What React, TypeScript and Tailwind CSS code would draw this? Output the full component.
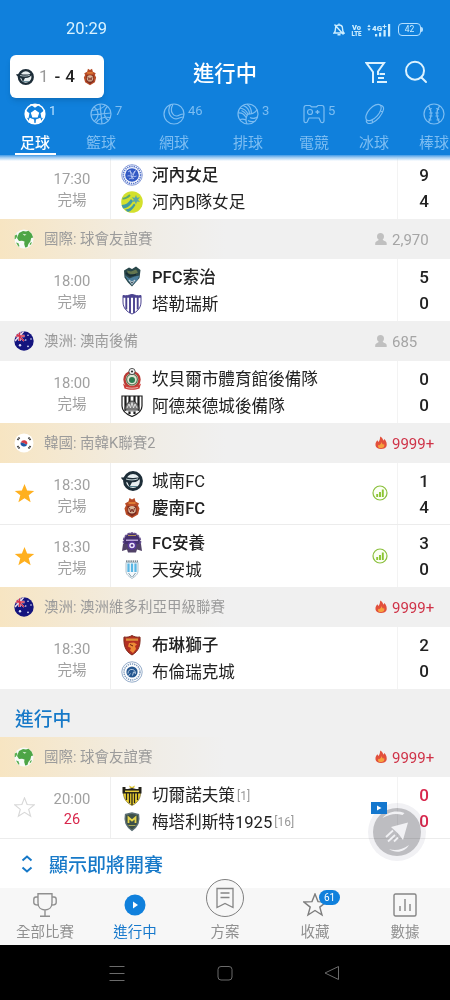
import type { ReactNode } from "react";

interface Team {
  name: string;
  crest: string;
  score: number;
  bold?: boolean;
  rank?: string;
}

interface Match {
  time: string;
  status: string;
  live?: boolean;
  star?: "on" | "off";
  stats?: boolean;
  home: Team;
  away: Team;
}

interface League {
  flag: string;
  name: string;
  viewers: string;
  hot?: boolean;
  plain?: boolean;
  matches: Match[];
}

const firstMatch: Match = {
  time: "17:30",
  status: "完場",
  home: { name: "河內女足", crest: "hanoi", score: 9, bold: true },
  away: { name: "河內B隊女足", crest: "hanoiB", score: 4 },
};

const finished: League[] = [
  {
    flag: "world",
    name: "國際: 球會友誼賽",
    viewers: "2,970",
    matches: [
      {
        time: "18:00",
        status: "完場",
        home: { name: "PFC索治", crest: "sochi", score: 5, bold: true },
        away: { name: "塔勒瑞斯", crest: "talleres", score: 0 },
      },
    ],
  },
  {
    flag: "au",
    name: "澳洲: 澳南後備",
    viewers: "685",
    plain: true,
    matches: [
      {
        time: "18:00",
        status: "完場",
        home: { name: "坎貝爾市體育館後備隊", crest: "campbell", score: 0 },
        away: { name: "阿德萊德城後備隊", crest: "adelaide", score: 0 },
      },
    ],
  },
  {
    flag: "kr",
    name: "韓國: 南韓K聯賽2",
    viewers: "9999+",
    hot: true,
    matches: [
      {
        time: "18:30",
        status: "完場",
        star: "on",
        stats: true,
        home: { name: "城南FC", crest: "seongnam", score: 1 },
        away: { name: "慶南FC", crest: "gyeongnam", score: 4, bold: true },
      },
      {
        time: "18:30",
        status: "完場",
        star: "on",
        stats: true,
        home: { name: "FC安養", crest: "anyang", score: 3, bold: true },
        away: { name: "天安城", crest: "cheonan", score: 0 },
      },
    ],
  },
  {
    flag: "au",
    name: "澳洲: 澳洲維多利亞甲級聯賽",
    viewers: "9999+",
    hot: true,
    matches: [
      {
        time: "18:30",
        status: "完場",
        home: { name: "布琳獅子", crest: "lions", score: 2, bold: true },
        away: { name: "布倫瑞克城", crest: "brunswick", score: 0 },
      },
    ],
  },
];

const live: League[] = [
  {
    flag: "world",
    name: "國際: 球會友誼賽",
    viewers: "9999+",
    hot: true,
    matches: [
      {
        time: "20:00",
        status: "26",
        live: true,
        star: "off",
        home: { name: "切爾諾夫策", crest: "chernivtsi", score: 0, rank: "[1]" },
        away: { name: "梅塔利斯特1925", crest: "metalist", score: 0, rank: "[16]" },
      },
    ],
  },
];

const crests: Record<string, ReactNode> = {
  hanoi: (
    <>
      <circle cx="11" cy="11" r="10.3" fill="#fff" stroke="#6d86d0" strokeWidth=".8" />
      <circle cx="11" cy="11" r="8.6" fill="none" stroke="#5b79cc" strokeWidth="1.6" strokeDasharray="1.400 .8" />
      <circle cx="11" cy="11" r="6.8" fill="#3259c4" />
      <path d="M7 8c2-2 3 0 4 2s2-4 4-3M6.500 12c3-1 5 2 9 0M8 15c2-1 3 0 5-.5M9 6l2 8 3-7" stroke="#c6d4f8" fill="none" strokeWidth=".8" />
    </>
  ),
  hanoiB: (
    <>
      <circle cx="11" cy="11" r="10.8" fill="#d3e02d" />
      <path d="M.6 14C5 14 8 11 10 8l2 2c-2 4-5 7-10 7.500zM4 18.500c4 0 7-3 9-6l1.500 1.500c-2 3-4 6-7.500 7z" fill="#3f9aa5" />
      <path d="M1.500 7.500C5 8 7 6 9 4" stroke="#5aa870" strokeWidth="1.800" fill="none" />
      <path d="M15 4l1 2.800 3-.5-2 2.400 2 2.200-3-.3-1 2.800-1.200-2.800-3 .3 2-2.200-2-2.400 3 .5z" fill="#5ba6a8" />
    </>
  ),
  sochi: (
    <>
      <path d="M3 4.500l5-3 3 1.500 4-2.500 4.500 3.500-1 8-3.500 4-4 4.500-4-4-3.500-5z" fill="#29474a" />
      <path d="M6 4.500l4 1 5-2 2 3-4 2-6-1z" fill="#64764f" />
      <path d="M3.500 9l5 3.500 5-2 5-1-2 4.500-5.500 5-4-4.500z" fill="#4a7c9a" />
      <path d="M5 7l4 3 6-1.500" stroke="#182c33" strokeWidth="1.600" fill="none" />
      <path d="M8 14l3 2 3-2-3 4.500z" stroke="#d7e3e8" strokeWidth=".8" fill="#1d2f3b" />
    </>
  ),
  talleres: (
    <>
      <path d="M2 2.500c3 1 6-.5 9-1 3 .5 6 2 9 1V9c0 6-4 10-9 12-5-2-9-6-9-12z" fill="#fff" stroke="#4b4390" />
      <path d="M5.300 3v13.500M9 2v18M13 2v18M16.700 3v13.500" stroke="#4b4390" strokeWidth="1.900" />
      <path d="M2 2.500c3 1 6-.5 9-1 3 .5 6 2 9 1v2.200H2z" fill="#4b4390" />
    </>
  ),
  campbell: (
    <>
      <circle cx="11" cy="11.500" r="7.500" fill="#dfe5d4" stroke="#b93b35" strokeWidth="2.400" />
      <circle cx="11" cy="11.500" r="5.400" fill="none" stroke="#5b7a58" strokeWidth="1.200" />
      <circle cx="11" cy="12" r="3" fill="#2d7b50" />
      <path d="M2 15.500c5 4 13 4 18 0l-1.500 5c-4.500 1.800-10.500 1.800-15 0z" fill="#cc3f3a" />
      <path d="M5 19.300c4 1.200 8 1.200 12 0" stroke="#f0c9c4" strokeWidth=".8" fill="none" />
      <circle cx="11" cy="3.500" r="3.100" fill="#f4f4f4" stroke="#333" strokeWidth=".8" />
      <circle cx="11" cy="3.500" r="1.100" fill="#333" />
    </>
  ),
  adelaide: (
    <>
      <path d="M1 1h20v10c0 5-5 8.500-10 10.500C6 19.500 1 16 1 11z" fill="#fff" stroke="#1c1c1c" strokeWidth="1.200" />
      <path d="M4.500 1v15M8.500 1v18M13.500 1v18M17.500 1v15" stroke="#1c1c1c" strokeWidth="2.200" />
      <path d="M4 14.500c0-4.500 3-8.500 7-8.500s7 4 7 8.500c-5 2-9 2-14 0z" fill="#777" stroke="#222" strokeWidth=".7" />
      <path d="M6 13l2-4 1.500 4L11 7.500l1.500 5.500L14 9l2 4M4.500 16h13" stroke="#e6e6e6" strokeWidth=".9" fill="none" />
    </>
  ),
  seongnam: (
    <>
      <circle cx="12" cy="11" r="8.400" fill="#e8eff1" stroke="#1d2d38" strokeWidth="3" />
      <path d="M0 7.500l6-.2c4 1 6 1 14-.3-2 4-5 5.500-9 5.200L8.500 17l-2-4.500C4 11 1 10.500 0 7.500z" fill="#1d2d38" />
      <path d="M5 9c4 1.300 8 1.200 12-.2" stroke="#c9d7da" strokeWidth="1" fill="none" />
      <path d="M8 16.500h8" stroke="#57808d" strokeWidth="1" />
    </>
  ),
  gyeongnam: (
    <>
      <path d="M7.500 4.500L8.500 1 11 2.500 13.500 1l1 3.500 3.500 2-1 2 1.500 3-1.500 6-6 3.500L5 17.500l-1.500-6L5 8.500l-1-2z" fill="#b74b26" />
      <path d="M6.500 9h9v7.500L11 19.500l-4.500-3z" fill="#7d2c21" />
      <circle cx="11" cy="12.800" r="3.800" fill="#d9b79a" />
      <path d="M8.500 11l1.200 4L11 12l1.300 3 1.200-4" fill="none" stroke="#7d2c21" />
      <path d="M7.500 6h7" stroke="#e9883b" strokeWidth="1.600" />
    </>
  ),
  anyang: (
    <>
      <circle cx="11" cy="9.500" r="8.500" fill="#44306e" stroke="#65508c" strokeWidth="1.600" strokeDasharray="2.500 1" />
      <path d="M2 12l-1 7 5-1.500 1 3h8l1-3 5 1.500-1-7z" fill="#514267" />
      <path d="M5 7.500h12v1.500H5z" fill="#b7a2d4" />
      <circle cx="11" cy="13.500" r="3.600" fill="#eee6fa" stroke="#56349a" strokeWidth="1.600" />
      <circle cx="11" cy="13.500" r="1.300" fill="#4f3586" />
      <path d="M7 3.500h8" stroke="#b49559" />
    </>
  ),
  cheonan: (
    <>
      <path d="M5 3.500h12V12c0 3.500-3 5.500-6 7.500-3-2-6-4-6-7.500z" fill="#f4f9fd" stroke="#9bb3c0" strokeWidth=".8" />
      <path d="M5 2.200h12" stroke="#50636e" strokeWidth="1.300" strokeDasharray="1.500 .7" />
      <path d="M7.500 4.500V13M11 4.500V13M14.500 4.500V13" stroke="#59b6e4" strokeWidth="2.300" />
      <path d="M7.500 14l3 4M14.500 14l-3 4" stroke="#77929f" strokeWidth=".9" />
    </>
  ),
  lions: (
    <>
      <path d="M3 3c3 .5 5.500 0 8-1.500C13.500 3 16 3.500 19 3c.5 8-1 14-8 18C4 17 2.500 11 3 3z" fill="#b32f22" stroke="#7d2a1c" />
      <path d="M5 4.500h12v2.300H5z" fill="#dc8f3b" />
      <path d="M8 9l5-.5 3 2-2 1.500 1 3-3 4-3-2.500 1-2.500-3-1.500z" fill="#ec8b36" />
      <path d="M9 10.500l3 1.500" stroke="#67210f" />
    </>
  ),
  brunswick: (
    <>
      <circle cx="11" cy="11" r="10.200" fill="#fff" stroke="#8aa4c4" strokeWidth=".9" />
      <circle cx="11" cy="11" r="8" fill="none" stroke="#7d99bb" strokeWidth="1.500" strokeDasharray="1.300 .9" />
      <circle cx="11" cy="11" r="5.600" fill="#24568f" />
      <path d="M7 12.500c0-3 2-4.500 4.500-4 2 .4 3 2 3 4l-2-1.500-1 3.500M7.500 15l2-2.500" stroke="#c4d7ea" fill="none" strokeWidth=".9" />
    </>
  ),
  chernivtsi: (
    <>
      <path d="M2.500 8h17c.3 6-2.500 10.500-8.500 13.500C5 18.500 2.200 14 2.500 8z" fill="#f2d633" stroke="#6d6224" strokeWidth=".7" />
      <path d="M5.500 9v7M8.500 9v10M11 9v12M13.500 9v10M16.500 9v7" stroke="#24221a" strokeWidth="1.300" />
      <path d="M1.500 3h3v2h2.500l4-1 4 1h2.500V3h3v6.500h-19z" fill="#24221a" />
      <path d="M4 7.300h14" stroke="#e9cf3a" strokeWidth="1.500" />
      <path d="M8 1.500l3 1.500 3-1.500-1 2.500H9z" fill="#d9c235" />
    </>
  ),
  metalist: (
    <>
      <path d="M4.500 3.500L11 2l6.500 1.500c1.500 7-.5 12-6.500 16C5 15.500 3 10.500 4.500 3.500z" fill="#3d5048" stroke="#5e7177" strokeWidth="1.300" />
      <path d="M7.500 12V6.500l3.500 3 3.500-3V12" fill="none" stroke="#e6d54b" strokeWidth="1.800" />
      <path d="M7.500 14.500h7" stroke="#a7a95a" strokeWidth="1" />
    </>
  ),
};

function Crest({ id, className = "size-[22px]" }: { id: string; className?: string }) {
  return (
    <svg viewBox="0 0 22 22" className={`${className} shrink-0`}>
      {crests[id]}
    </svg>
  );
}

function Flag({ id }: { id: string }) {
  if (id === "au") {
    return (
      <svg viewBox="0 0 20 20" className="size-5 shrink-0">
        <clipPath id="auClip">
          <circle cx="10" cy="10" r="9.700" />
        </clipPath>
        <g clipPath="url(#auClip)">
          <path d="M0 0h20v20H0z" fill="#14147e" />
          <path d="M0 0l10 10M10 0L1 10" stroke="#e9dcea" strokeWidth="1.600" />
          <path d="M5.500 0v10M0 5h10.500" stroke="#f3e6ec" strokeWidth="2.400" />
          <path d="M5.500 0v10M0 5h10.500M0 0l10 10" stroke="#d3304b" strokeWidth="1.300" />
        </g>
        <g fill="#dfe3f7">
          <circle cx="6" cy="14.300" r="1.200" />
          <circle cx="14" cy="4.300" r=".8" />
          <circle cx="11.700" cy="9" r=".8" />
          <circle cx="17" cy="8" r=".8" />
          <circle cx="14" cy="15.300" r=".9" />
        </g>
      </svg>
    );
  }
  if (id === "kr") {
    return (
      <svg viewBox="0 0 20 20" className="size-5 shrink-0">
        <circle cx="10" cy="10" r="9.500" fill="#fff" />
        <path d="M6.800 9.500a3.400 3.400 0 016.600 1.300C12 12 11 10.500 10 10.200c-1.200-.5-2 0-3.200-.7z" fill="#d33a45" />
        <path d="M6.700 9.300c1.100.9 2.100.3 3.300.9 1.300.6 1.900 1.400 3.300.8a3.400 3.400 0 01-6.600-1.700z" fill="#1e56a5" />
        <path d="M3.500 7l2-2.500M16.500 7l-2-2.500M3.500 13l2 2.500M16.500 13l-2 2.500" stroke="#3d3d3d" strokeWidth="1.800" strokeDasharray="1.400 .4" />
      </svg>
    );
  }
  return (
    <svg viewBox="0 0 20 20" className="size-5 shrink-0">
      <circle cx="10" cy="10" r="9.500" fill="#f7faf7" />
      <path d="M5 4l4-2 3 .6 2.500-.8 3 2.700 1.700 4-2 .5-.8 3.500-2 2.500-1 3-2.200.6-1-3.700.3-2.500-2.500-.7-3 .2L3 9z" fill="#4da546" />
      <path d="M.8 6.500L3 5.500l.3 2L1.500 10l-.9.2zM2 13.500l2.500.7 1 3-1.200.3zM16 14l2-1-1 2.500-1.300.8z" fill="#5cb052" />
      <path d="M8.500 4.800l4 .7-2 1.300z" fill="#dbefd7" />
    </svg>
  );
}

function Flame() {
  return (
    <svg viewBox="0 0 14 16" className="-mt-[2px] h-[15px] w-[12px]">
      <path d="M6 1c3 1.500 3.500 3.500 3.500 5L11 4c2.500 3 3 5.500 2.500 8-.7 2.500-3 3.500-6.500 3.500S1 14 .6 11.500C.2 9 1.500 7 2.800 5.500L4 7.500C5.500 5.500 6 3.500 6 1z" fill="#e2503c" />
      <path d="M7.500 7.500c1 2 1 2.500 2 3l1-1c1 2.500.3 4.800-3.500 5-3.500 0-4-2-3-4l1 .8c1.500-1 2.200-2 2.500-3.800z" fill="#f6a23e" />
    </svg>
  );
}

function LeagueHeader({ league }: { league: League }) {
  return (
    <div
      className={`flex h-10 items-center pl-[14px] text-[14.500px] ${
        league.plain ? "bg-[#f0f0f0]" : "bg-linear-to-r from-[#f7e5c2] via-[#f0ede7] via-35% to-[#f0f0f0] to-50%"
      }`}
    >
      <Flag id={league.flag} />
      <span className="mt-[2px] ml-[10px] leading-5 text-[#9b9b9b]">{league.name}</span>
      <div className="ml-auto flex w-[75px] items-center">
        {league.hot ? (
          <Flame />
        ) : (
          <svg viewBox="0 0 12 12" className="size-3">
            <path d="M5.500 0c2.200 0 3.500 1.500 3.500 3.500 0 1.500-.7 2.500-1.300 3.200.3.900 3.500 1.200 4 3.300v2H.2v-1.800C.5 8 3.500 7.700 3.700 6.700 2.700 6 2 5 2 3.500 2 1.500 3.300 0 5.500 0z" fill="#c0c0c0" />
          </svg>
        )}
        <span className={`mt-[1px] ml-[5px] text-[15px] leading-5 ${league.hot ? "text-[#cf3348]" : "text-[#a5a5a5]"}`}>
          {league.viewers}
        </span>
      </div>
    </div>
  );
}

const STAR = "M12 1l3 7.600 8.100.4-6.300 5.100 2.200 7.900-7-4.500L5 22l2.200-7.900L.9 9 9 8.600z";

function TeamLine({ team }: { team: Team }) {
  return (
    <div className="flex h-[26.500px] items-center pl-[10px]">
      <Crest id={team.crest} />
      <span
        className={`mt-[2px] ml-[9px] text-[16.600px] leading-6 whitespace-nowrap text-[#222] ${
          team.bold ? "font-medium" : ""
        }`}
      >
        {team.name}
      </span>
      {team.rank && <span className="mt-[1px] ml-[2px] text-[12px] text-[#999]">{team.rank}</span>}
    </div>
  );
}

function MatchRow({ match, border }: { match: Match; border?: boolean }) {
  return (
    <div className={`flex h-[62px] bg-white ${border ? "border-b border-[#ececec]" : ""}`}>
      <div className="flex w-[48px] items-center justify-center">
        {match.star && (
          <svg viewBox="0 0 24 24" className="size-[21px]">
            <path
              d={STAR}
              fill={match.star === "on" ? "#ffb01f" : "#fff"}
              stroke={match.star === "on" ? "none" : "#d8d8d8"}
              strokeWidth="1.300"
            />
          </svg>
        )}
      </div>
      <div className="flex w-[63px] flex-col items-center border-r border-[#efefef] pt-3 pr-[14px] text-[14.500px] leading-[20.500px] text-[#a0a0a0]">
        <span className="text-[14.800px]">{match.time}</span>
        <span className={match.live ? "text-[#d8274c]" : "mt-[1px]"}>{match.status}</span>
      </div>
      <div className="flex-1 pt-[5px]">
        <TeamLine team={match.home} />
        <TeamLine team={match.away} />
      </div>
      {match.stats && (
        <div className="mr-[9px] flex items-center">
          <svg viewBox="0 0 16 16" className="-mt-[1px] size-4">
            <circle cx="8" cy="8" r="7" fill="#fbfff4" stroke="#8abf3c" strokeWidth="1.200" />
            <path d="M5.200 12V9M8 12V7M10.800 12V4.500" stroke="#8bc530" strokeWidth="1.900" />
          </svg>
        </div>
      )}
      {match.live && (
        <div className="relative z-10 mr-[10px] flex items-center">
          <svg viewBox="0 0 16 12" className="h-3 w-4">
            <path d="M0 0h16v12H0z" fill="#1477ce" />
            <path d="M6 3.500l4.500 2.500L6 8.500z" fill="#fff" />
          </svg>
        </div>
      )}
      <div
        className={`flex w-[53px] flex-col items-center border-l border-[#f3f3f3] pt-[5px] text-[17px] leading-[26px] font-medium ${
          match.live ? "text-[#d8274c]" : "text-[#222]"
        }`}
      >
        <span>{match.home.score}</span>
        <span>{match.away.score}</span>
      </div>
    </div>
  );
}

function LeagueBlock({ league }: { league: League }) {
  return (
    <div>
      <LeagueHeader league={league} />
      {league.matches.map((m, i) => (
        <MatchRow key={i} match={m} border={i < league.matches.length - 1 || m.live} />
      ))}
    </div>
  );
}

const tabs: { label: string; count?: number; width: string; icon: ReactNode }[] = [
  {
    label: "足球",
    count: 1,
    width: "w-[70px]",
    icon: (
      <>
        <circle cx="11" cy="11" r="9.800" strokeWidth="1.500" />
        <path d="M11 7.500l3.500 2.500-1.300 4H8.800L7.500 10z" fill="currentColor" />
        <path d="M7.500 1.500L11 4l3.500-2.500zM20.500 8l-3.300 2.500.8 4 2.500-1zM1.500 8l3.300 2.500-.8 4-2.500-1zM5 19l1-3.500 3.500 1.500.3 3.500zM17 19l-1-3.500-3.500 1.500-.3 3.500z" fill="currentColor" />
      </>
    ),
  },
  {
    label: "籃球",
    count: 7,
    width: "w-[62px]",
    icon: (
      <>
        <circle cx="11" cy="11" r="10" />
        <path d="M10 1l2 20M1 12l20-2M4 4c5 3.500 5.500 10 .5 14M17.500 3.500c-4.500 4-4 11 1 14M1.800 7.500C7 7 13 5.500 15.500 2M6 20c2-4.500 8-6.500 14-5.500" />
      </>
    ),
  },
  {
    label: "網球",
    count: 46,
    width: "w-[84px]",
    icon: (
      <>
        <circle cx="11" cy="11" r="10" />
        <path d="M7.500 1.700C5.500 5 5.500 9 7 12c1.500 3 5 4.500 8 3.500 2-.7 3.500-1.500 5.500-1.500M10 1.300C8 5 8 8.500 9.500 10.500c1.500 2.500 4.500 3 7 1.500 1.500-.8 3-1 4.500-1" />
      </>
    ),
  },
  {
    label: "排球",
    count: 3,
    width: "w-[64px]",
    icon: (
      <>
        <circle cx="11" cy="11" r="10" />
        <path d="M11 11C9 7 6 5.500 3 5M11 11c4.500.3 7.500-1.500 9-4.500M11 11c-2.500 3.500-2.500 7-1 10M10 1.200c3 2 4.500 5.500 4.300 9M6 2.500c4 1.300 6.300 4.500 6.500 8.300M1.300 10c3-.5 6 1.500 7.800 4.500M3 16.500c2-.8 4-.5 6 .5M13 14.500c2.500 1.500 5 1 7.300-.5M11 17.500c2 1.200 4.500 1.300 6.500.7M4.500 7.500c2.500 1 4.500 3 5.800 5.300" />
      </>
    ),
  },
  {
    label: "電競",
    count: 5,
    width: "w-[68px]",
    icon: (
      <>
        <path d="M3 2.500h4l1.500 1.300h5L15 2.500h4c1.200 0 2 1 2 2.500v13c0 2-3 2.200-3.500.3L16 15H6l-1.500 3.300C4 20.200 1 20 1 18V5c0-1.500.8-2.500 2-2.500z" />
        <circle cx="7" cy="9" r="2.500" />
        <path d="M14.500 7v4M12.500 9h4M7 9h.1M18 6.500v.1M18 11v.1" strokeWidth="1.300" />
      </>
    ),
  },
  {
    label: "冰球",
    width: "w-[52px]",
    icon: (
      <>
        <ellipse cx="10.500" cy="9.500" rx="10" ry="5" transform="rotate(-48 10.500 9.500)" />
        <path d="M3.500 17.200c-.8 3 2.300 4 5.500 2.800 5-2 10.500-8.500 11.500-13.500.4-2.500-.8-4-3-4.200M9.500 19.500l-.4-2.500M19.700 9l-2-.7" />
      </>
    ),
  },
  {
    label: "棒球",
    width: "w-[68px]",
    icon: (
      <>
        <circle cx="11" cy="11" r="10" />
        <path d="M5.500 2.800c3.500 5 3.500 11.500 0 16.500M16.500 2.800c-3.500 5-3.500 11.500 0 16.500M5.800 6.500l3-1M6.300 10h3.400M6.300 13h3.200M5.500 16l3 1M16.200 6.500l-3-1M15.700 10h-3.400M15.700 13h-3.200M16.500 16l-3 1" />
      </>
    ),
  },
];

function Header() {
  return (
    <header className="relative h-[156px] shrink-0 bg-[#1080dc] text-white">
      <div className="flex h-[57px] items-center pt-[2px] pr-[27px] pl-[66px]">
        <span className="text-[16.500px] text-[#d9f2ff]">20:29</span>
        <div className="ml-auto flex items-center text-[#cdeeff]">
          <svg viewBox="0 0 12 13" className="h-[13px] w-3" fill="none" stroke="currentColor" strokeWidth="1.400">
            <path d="M1 10h10c-1.500-1.300-1.500-3-1.500-4.500C9.500 3.500 8 2 6 2S2.500 3.500 2.500 5.500C2.500 7 2.500 8.700 1 10zM6 .5V2M4.500 11.800h3M1.500 1.500l9 10" />
          </svg>
          <svg viewBox="0 0 11 14" className="ml-[6px] h-[14px] w-[11px]" fill="currentColor" fontWeight="900">
            <text x="1" y="6.500" fontSize="7.500">Vo</text>
            <text x="0.500" y="13" fontSize="6.500" textLength="10" lengthAdjust="spacingAndGlyphs">LTE</text>
          </svg>
          <svg viewBox="0 0 24 14" className="ml-[5px] h-[14px] w-6" fill="currentColor">
            <path d="M.3 4l1.700-2.500L3.700 4zM.3 5.500h3.400L2 8zM8 11h2.200v2.500H8zM12 9.500h2.200v4H12zM16.500 7h2.200v6.500h-2.200zM21 1h2.200v12.500H21z" />
            <text x="5" y="7.500" fontSize="8" fontWeight="900">4G</text>
            <path d="M15.500 3.500h4M17.500 1.500v4" stroke="currentColor" />
          </svg>
          <div className="ml-[7px] flex h-[13px] w-[23px] items-center justify-center rounded-[4px] border-[1.500px] border-[#b4dfff] text-[8.500px]">
            42
          </div>
          <div className="h-[5px] w-[2px] rounded-r bg-[#b4dfff]" />
        </div>
      </div>
      <div className="flex h-8 items-center">
        <div className="w-[100px]" />
        <h1 className="mt-[2px] flex-1 text-center text-[21.300px] leading-8 font-medium">進行中</h1>
        <div className="-ml-[15px] flex w-[115px] items-center justify-between pl-[30px] text-[#dcf2ff]">
          <svg viewBox="0 0 24 24" className="-mt-[2px] size-6" fill="none" stroke="currentColor" strokeWidth="2">
            <path d="M8 23V12L1.500 3h17.500L13 11.500V15M14.500 14h5.500M13 18h6M12 22h10" />
          </svg>
          <svg viewBox="0 0 24 24" className="-mt-[3px] mr-[22px] size-6" fill="none" stroke="currentColor" strokeWidth="2">
            <circle cx="11" cy="10.700" r="9" />
            <path d="M17.500 17.500l4.500 4.500" strokeLinecap="round" />
          </svg>
        </div>
      </div>
      <nav className="flex h-[67px] overflow-hidden">
        {tabs.map((tab, i) => (
          <div
            key={tab.label}
            className={`flex shrink-0 flex-col items-center pt-[14px] ${tab.width} ${i === 0 ? "text-white" : "text-[#7dbdf2]"}`}
          >
            <div className="relative">
              <svg viewBox="0 0 22 22" className="size-[22px]" fill="none" stroke="currentColor" strokeWidth="1.200">
                {tab.icon}
              </svg>
              {tab.count && (
                <span className={`absolute top-0 left-[25px] text-[13px] leading-4 ${i === 0 ? "text-[#b9e0ff]" : ""}`}>
                  {tab.count}
                </span>
              )}
            </div>
            <span className={`mt-[8px] text-[15px] leading-5 ${i === 0 ? "font-medium" : ""}`}>{tab.label}</span>
            {i === 0 && <div className="h-[4px] w-[41px] bg-white" />}
          </div>
        ))}
      </nav>
      <div className="absolute top-[155px] left-0 z-10 h-[6px] w-full bg-linear-to-b from-[#3d99e5] via-[#9bcaf2] via-40% to-white/0" />
      <div className="absolute top-[55px] left-[10px] flex h-[43px] w-[94px] items-center rounded-md bg-white px-[6px] text-[17px] shadow-md">
        <Crest id="seongnam" className="size-[18px]" />
        <span className="ml-[5px] text-[#999]">1</span>
        <span className="ml-[6px] font-medium text-[#222]">-</span>
        <span className="ml-[5px] font-medium text-[#222]">4</span>
        <Crest id="gyeongnam" className="ml-[6px] size-[18px]" />
      </div>
    </header>
  );
}

function BottomNav() {
  const item = "flex w-[90px] flex-col items-center pt-[5px]";
  return (
    <nav className="flex h-[57px] shrink-0 bg-[#f7f7f7] text-[14.500px] leading-5 text-[#909090]">
      <div className={item}>
        <svg viewBox="0 0 24 24" className="size-6" fill="none" stroke="currentColor" strokeWidth="1.400">
          <path d="M5 .8h14v9c0 4.500-3 7.200-7 7.200s-7-2.700-7-7.200zM5 4H3C1.500 4 .8 5 .8 6.500v3C.8 11.500 2 12 5 12M19 4h2c1.500 0 2.200 1 2.200 2.500v3c0 2-1.200 2.500-4.200 2.500M12 17v6M7 23.200h10" />
        </svg>
        <span className="mt-[6px]">全部比賽</span>
      </div>
      <div className={`${item} text-[#1779cc]`}>
        <svg viewBox="0 0 24 24" className="size-6">
          <circle cx="12" cy="12" r="10.500" fill="#1080dc" />
          <path d="M10 8.500l5 3.500-5 3.500z" fill="#fff" />
        </svg>
        <span className="mt-[6px]">進行中</span>
      </div>
      <div className="flex w-[90px] flex-col items-center">
        <div className="-mt-[9px] flex size-[38px] items-center justify-center rounded-full border border-[#808080] bg-[#f7f7f7]">
          <svg viewBox="0 0 20 22" className="h-[22px] w-5" fill="none" stroke="#858585" strokeWidth="1.300">
            <path d="M2 1.500h16v19l-8-4-8 4zM5.500 6h9M5.500 10.500h9" />
          </svg>
        </div>
        <span className="mt-[6px]">方案</span>
      </div>
      <div className={item}>
        <div className="relative">
          <svg viewBox="0 0 24 24" className="size-6" fill="none" stroke="#7d7d7d" strokeWidth="1.400">
            <path d={STAR} />
          </svg>
          <span className="absolute -top-[3px] left-[16px] flex h-[15px] w-[21px] items-center justify-center rounded-full bg-[#1080dc] text-[10px] text-white">
            61
          </span>
        </div>
        <span className="mt-[6px]">收藏</span>
      </div>
      <div className={item}>
        <svg viewBox="0 0 24 24" className="size-6" fill="none" stroke="#858585" strokeWidth="1.400">
          <rect x="1" y="1" width="22" height="22" rx="1.500" />
          <path d="M7 18v-5M12 18V6M17 18v-7" />
        </svg>
        <span className="mt-[6px]">數據</span>
      </div>
    </nav>
  );
}

export default function App() {
  return (
    <div className="relative flex h-[1000px] w-[450px] flex-col overflow-hidden bg-white font-[Roboto,'Noto_Sans_CJK_TC',sans-serif]">
      <Header />
      <main className="flex-1 overflow-hidden pt-[1px]">
        <MatchRow match={firstMatch} />
        {finished.map((league) => (
          <LeagueBlock key={league.name} league={league} />
        ))}
        <h2 className="flex h-[48px] items-center bg-[#f0f0f0] pt-[13px] pl-[15px] text-[18.800px] leading-6 font-medium text-[#1779c8]">
          進行中
        </h2>
        {live.map((league) => (
          <LeagueBlock key={league.name} league={league} />
        ))}
        <div className="flex h-[49px] items-center bg-white pl-[21px] text-[#1779c8]">
          <svg viewBox="0 0 12 18" className="h-[18px] w-3" fill="none" stroke="currentColor" strokeWidth="2">
            <path d="M1.500 5.500L6 1.500l4.500 4M1.500 12.500l4.500 4 4.500-4" />
          </svg>
          <span className="mt-1 ml-4 text-[19px] leading-6 font-medium">顯示即將開賽</span>
        </div>
      </main>
      <BottomNav />
      <footer className="flex h-[55px] shrink-0 items-center bg-black pl-[109px]">
        <svg viewBox="0 0 16 16" className="size-4" fill="none" stroke="#6b6b6b">
          <path d="M.5 1.500h15M.5 8.500h15M.5 15.500h15" />
        </svg>
        <svg viewBox="0 0 16 16" className="ml-[92px] size-4" fill="none" stroke="#6b6b6b">
          <rect x="1" y="1.500" width="14" height="13.500" rx="3" />
        </svg>
        <svg viewBox="0 0 16 16" className="ml-[91px] size-4" fill="none" stroke="#6b6b6b" strokeLinejoin="round">
          <path d="M14.500 1.500v13L1 8z" />
        </svg>
      </footer>

      {/* floating button, the score underneath stays readable */}
      <div className="pointer-events-none absolute top-[802px] left-[367px] mix-blend-multiply">
        <svg viewBox="0 0 60 60" className="size-[60px]">
          <circle cx="30" cy="30" r="29" fill="#f1f1f4" />
          <circle cx="30" cy="30" r="24" fill="#bdbdc1" />
        </svg>
      </div>
      <svg viewBox="0 0 60 60" className="pointer-events-none absolute top-[802px] left-[367px] size-[60px]">
        <path d="M41 20.500L36 38l-4-5.500-2-2L24 25z" fill="#f1f1f4" />
        <path d="M19 35l7-6.500M21 39.500l7-6.500M27 39.500l4-4" stroke="#f1f1f4" strokeWidth="1.800" />
        <path d="M15.500 16c5-6 13-8 22-5l-2 2c-7-2-12-1-20 3zM22 47c6 2 13 1 20-4-4 7-13 9-20 4z" fill="#f1f1f4" />
      </svg>
    </div>
  );
}
